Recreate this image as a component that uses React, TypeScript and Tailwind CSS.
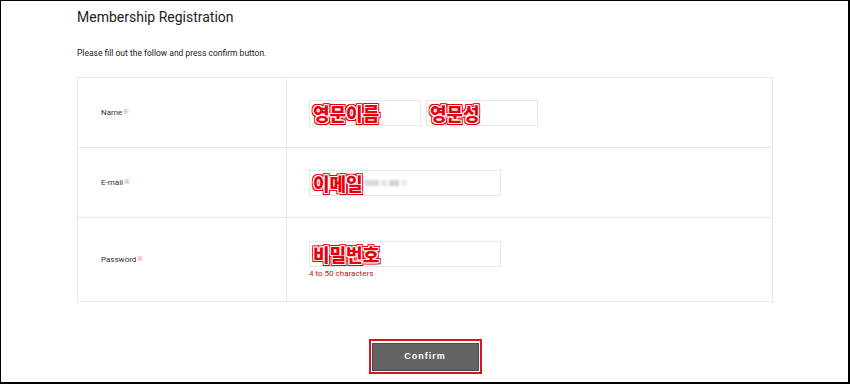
import React from "react";

const markStyle =
  "font-['Noto_Sans_CJK_KR',sans-serif] font-black text-[18px] leading-none text-[#e8000b] [text-shadow:-1px_-1px_0_#fff,1px_-1px_0_#fff,-1px_1px_0_#fff,1px_1px_0_#fff,0_-1px_0_#fff,0_1px_0_#fff,-1px_0_0_#fff,1px_0_0_#fff,-2px_-2px_0_#e8000b,2px_-2px_0_#e8000b,-2px_2px_0_#e8000b,2px_2px_0_#c00008,0_2px_0_#c00008,2px_0_0_#e8000b,-2px_0_0_#e8000b,0_-2px_0_#e8000b]";

function Label({ text }: { text: string }) {
  return (
    <div className="w-[209px] shrink-0 border-r border-[#e6e6e6] flex items-center pl-[23px] text-[8px] text-[#333]">
      {text}
      <span className="text-[#e26a6a] text-[7px] ml-[1px]">※</span>
    </div>
  );
}

function Field({ width, mark, blur }: { width: string; mark: string; blur?: boolean }) {
  return (
    <div className={`${width} h-[26px] border border-[#e6e6e6] bg-white flex items-center pl-[3px]`}>
      <span className={markStyle}>{mark}</span>
      {blur && (
        <div className="flex items-center gap-[2px] ml-[1px]">
          <div className="w-[15px] h-[6px] bg-[#d9d9d9] blur-[1px]" />
          <div className="w-[6px] h-[6px] bg-[#e6e6e6] blur-[1px]" />
          <div className="w-[10px] h-[6px] bg-[#d2d2d2] blur-[1px]" />
          <div className="w-[6px] h-[6px] bg-[#ececec] blur-[1px]" />
        </div>
      )}
    </div>
  );
}

export default function App() {
  return (
    <div className="w-[850px] h-[384px] border-l border-t border-r-2 border-b-2 border-black bg-white font-['Roboto','Liberation_Sans',sans-serif] overflow-hidden">
      <div className="ml-[76px] w-[696px]">
        <h1 className="text-[14px] leading-[20px] text-[#222] pt-[6px]">Membership Registration</h1>
        <p className="text-[8.5px] text-[#222] mt-[20px] leading-[12px]">
          Please fill out the follow and press confirm button.
        </p>

        <div className="mt-[18px] border border-[#e6e6e6]">
          <div className="flex h-[70px] border-b border-[#e6e6e6]">
            <Label text="Name" />
            <div className="flex items-center pl-[22px] gap-[5px]">
              <Field width="w-[112px]" mark="영문이름" />
              <Field width="w-[112px]" mark="영문성" />
            </div>
          </div>
          <div className="flex h-[70px] border-b border-[#e6e6e6]">
            <Label text="E-mail" />
            <div className="flex items-center pl-[22px]">
              <Field width="w-[192px]" mark="이메일" blur />
            </div>
          </div>
          <div className="flex h-[83px]">
            <Label text="Password" />
            <div className="flex flex-col justify-center pl-[22px]">
              <Field width="w-[192px]" mark="비밀번호" />
              <p className="text-[8px] text-[#b02020] mt-[2px] leading-[10px]">4 to 50 characters</p>
            </div>
          </div>
        </div>
      </div>

      <div className="flex justify-center mt-[37px] pl-[1px]">
        <div className="border-2 border-[#d9141b] p-[1px] bg-white">
          <button
            type="button"
            className="w-[107px] h-[28px] bg-[#636363] border border-[#4a4a4a] text-white text-[9px] font-bold tracking-[1px] font-['Liberation_Sans',sans-serif]"
          >
            Confirm
          </button>
        </div>
      </div>
    </div>
  );
}
